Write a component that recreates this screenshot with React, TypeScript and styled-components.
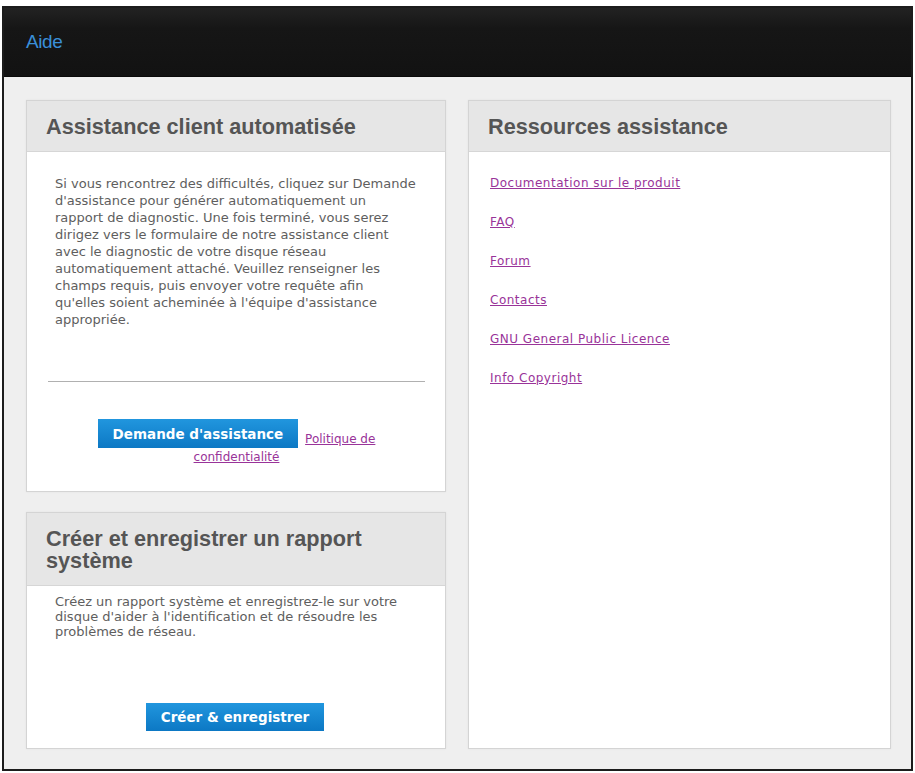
import styled, { createGlobalStyle } from "styled-components";

const GlobalStyle = createGlobalStyle`
  html, body {
    margin: 0;
    padding: 0;
    background: #ffffff;
  }
  body {
    font-family: "DejaVu Sans", Verdana, sans-serif;
  }
`;

const Frame = styled.div`
  margin: 6px 2px 0 2px;
  height: 761px;
  border: 2px solid #1c1c1c;
  display: flex;
  flex-direction: column;
`;

const TopBar = styled.header`
  height: 69px;
  flex-shrink: 0;
  display: flex;
  align-items: center;
  padding-left: 22px;
  background: linear-gradient(#222222, #161616 30%, #121212);
  border-bottom: 1px solid #0a0a0a;
  box-sizing: border-box;
`;

const TopTitle = styled.span`
  font-family: "Liberation Sans", Arial, sans-serif;
  font-size: 19px;
  letter-spacing: -0.4px;
  color: #3a8fd8;
`;

const Content = styled.main`
  flex: 1;
  min-height: 0;
  background: #efefef;
  padding: 23px 20px 20px 22px;
  display: grid;
  grid-template-columns: 420px 423px;
  column-gap: 22px;
`;

const Column = styled.div`
  display: flex;
  flex-direction: column;
  gap: 20px;
`;

const Panel = styled.section<{ $grow?: boolean }>`
  background: #ffffff;
  border: 1px solid #d4d4d4;
  box-shadow: 0 0 2px rgba(0, 0, 0, 0.06);
  display: flex;
  flex-direction: column;
  flex: ${(p) => (p.$grow ? 1 : "none")};
`;

const PanelHead = styled.h2`
  margin: 0;
  padding: 15px 19px 13px;
  background: #e6e6e6;
  border-bottom: 1px solid #d6d6d6;
  font-family: "Liberation Sans", Arial, sans-serif;
  font-size: 21.7px;
  line-height: 22px;
  font-weight: bold;
  color: #555555;
`;

const PanelBody = styled.div<{ $pad: string }>`
  padding: ${(p) => p.$pad};
`;

const Text = styled.p<{ $lh: number }>`
  margin: 0;
  padding: 0 6px 0 7px;
  font-size: 13px;
  line-height: ${(p) => p.$lh}px;
  color: #5e5e5e;
  white-space: nowrap;
`;

const Rule = styled.hr`
  margin: 53px 0 37px;
  border: none;
  border-top: 1px solid #b0b0b0;
`;

const ActionRow = styled.div<{ $top?: number; $inset?: number }>`
  text-align: center;
  font-size: 12px;
  line-height: 18px;
  margin-top: ${(p) => p.$top ?? 0}px;
  padding: 0 ${(p) => p.$inset ?? 0}px;
`;

const BlueButton = styled.button<{ $h: number }>`
  display: inline-block;
  vertical-align: bottom;
  height: ${(p) => p.$h}px;
  margin-right: 3px;
  padding: 0 15px;
  border: none;
  border-radius: 0;
  background: linear-gradient(#2196de, #0c78c4);
  color: #ffffff;
  font-family: "DejaVu Sans", Verdana, sans-serif;
  font-weight: bold;
  font-size: 13.5px;
  cursor: pointer;
`;

const Link = styled.a`
  color: #993399;
  text-decoration: underline;
  cursor: pointer;
`;

const LinkList = styled.ul`
  list-style: none;
  margin: 0;
  padding: 24px 20px 0 21px;
  display: flex;
  flex-direction: column;
  gap: 24px;
  font-size: 12px;
  line-height: 15px;
  letter-spacing: 0.5px;
`;

const assistanceLines = [
  "Si vous rencontrez des difficultés, cliquez sur Demande",
  "d'assistance pour générer automatiquement un",
  "rapport de diagnostic. Une fois terminé, vous serez",
  "dirigez vers le formulaire de notre assistance client",
  "avec le diagnostic de votre disque réseau",
  "automatiquement attaché. Veuillez renseigner les",
  "champs requis, puis envoyer votre requête afin",
  "qu'elles soient acheminée à l'équipe d'assistance",
  "appropriée.",
];

const reportLines = [
  "Créez un rapport système et enregistrez-le sur votre",
  "disque d'aider à l'identification et de résoudre les",
  "problèmes de réseau.",
];

const resources = [
  "Documentation sur le produit",
  "FAQ",
  "Forum",
  "Contacts",
  "GNU General Public Licence",
  "Info Copyright",
];

const Lines = ({ lines, lh }: { lines: string[]; lh: number }) => (
  <Text $lh={lh}>
    {lines.map((l, i) => (
      <span key={i}>
        {l}
        {i < lines.length - 1 && <br />}
      </span>
    ))}
  </Text>
);

export default function App() {
  return (
    <>
      <GlobalStyle />
      <Frame>
        <TopBar>
          <TopTitle>Aide</TopTitle>
        </TopBar>
        <Content>
          <Column>
            <Panel>
              <PanelHead>Assistance client automatisée</PanelHead>
              <PanelBody $pad="23px 20px 25px 21px">
                <Lines lines={assistanceLines} lh={17} />
                <Rule />
                <ActionRow $inset={30}>
                  <BlueButton $h={29}>Demande d'assistance</BlueButton>{" "}
                  <Link>Politique de confidentialité</Link>
                </ActionRow>
              </PanelBody>
            </Panel>
            <Panel $grow>
              <PanelHead>Créer et enregistrer un rapport système</PanelHead>
              <PanelBody $pad="8px 20px 16px 21px">
                <Lines lines={reportLines} lh={15} />
                <ActionRow $top={64}>
                  <BlueButton $h={28}>Créer &amp; enregistrer</BlueButton>
                </ActionRow>
              </PanelBody>
            </Panel>
          </Column>
          <Panel $grow>
            <PanelHead>Ressources assistance</PanelHead>
            <LinkList>
              {resources.map((r) => (
                <li key={r}>
                  <Link>{r}</Link>
                </li>
              ))}
            </LinkList>
          </Panel>
        </Content>
      </Frame>
    </>
  );
}
